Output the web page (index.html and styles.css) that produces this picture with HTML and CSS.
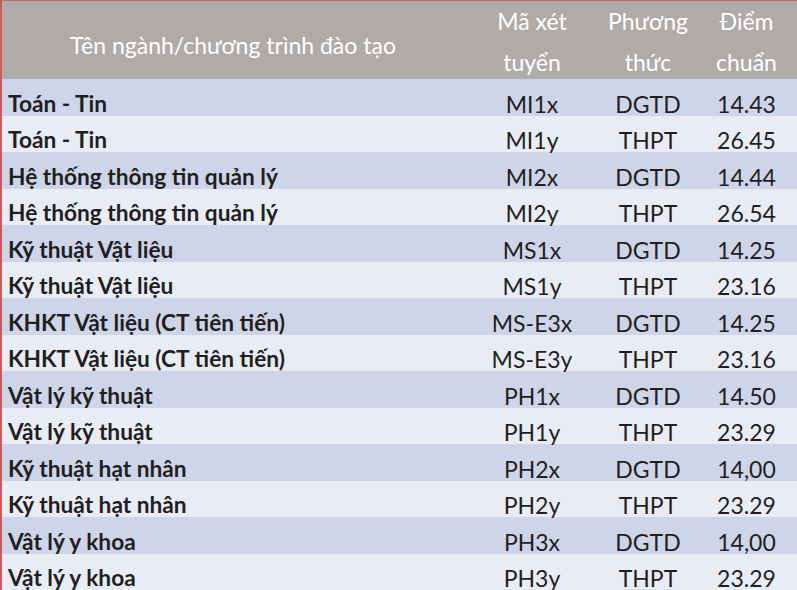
FILE: index.html
```html
<!DOCTYPE html>
<html lang="vi">
<head>
<meta charset="utf-8">
<link rel="stylesheet" href="styles.css">
</head>
<body>
<div class="frame">
<table class="scores">
<colgroup>
<col class="c-name"><col class="c-code"><col class="c-method"><col class="c-score">
</colgroup>
<thead>
<tr>
<th class="h-name"><div class="hd">Tên ngành/chương trình đào tạo</div></th>
<th><div class="hd">Mã xét<br>tuyển</div></th>
<th><div class="hd">Phương<br>thức</div></th>
<th><div class="hd">Điểm<br>chuẩn</div></th>
</tr>
</thead>
<tbody>
<tr><td class="name">Toán - Tin</td><td>MI1x</td><td>DGTD</td><td>14.43</td></tr>
<tr><td class="name">Toán - Tin</td><td>MI1y</td><td>THPT</td><td>26.45</td></tr>
<tr><td class="name">Hệ thống thông tin quản lý</td><td>MI2x</td><td>DGTD</td><td>14.44</td></tr>
<tr><td class="name">Hệ thống thông tin quản lý</td><td>MI2y</td><td>THPT</td><td>26.54</td></tr>
<tr><td class="name">Kỹ thuật Vật liệu</td><td>MS1x</td><td>DGTD</td><td>14.25</td></tr>
<tr><td class="name">Kỹ thuật Vật liệu</td><td>MS1y</td><td>THPT</td><td>23.16</td></tr>
<tr><td class="name">KHKT Vật liệu (CT tiên tiến)</td><td>MS-E3x</td><td>DGTD</td><td>14.25</td></tr>
<tr><td class="name">KHKT Vật liệu (CT tiên tiến)</td><td>MS-E3y</td><td>THPT</td><td>23.16</td></tr>
<tr><td class="name">Vật lý kỹ thuật</td><td>PH1x</td><td>DGTD</td><td>14.50</td></tr>
<tr><td class="name">Vật lý kỹ thuật</td><td>PH1y</td><td>THPT</td><td>23.29</td></tr>
<tr><td class="name">Kỹ thuật hạt nhân</td><td>PH2x</td><td>DGTD</td><td>14,00</td></tr>
<tr><td class="name">Kỹ thuật hạt nhân</td><td>PH2y</td><td>THPT</td><td>23.29</td></tr>
<tr><td class="name">Vật lý y khoa</td><td>PH3x</td><td>DGTD</td><td>14,00</td></tr>
<tr><td class="name">Vật lý y khoa</td><td>PH3y</td><td>THPT</td><td>23.29</td></tr>
</tbody>
</table>
</div>
</body>
</html>
```
FILE: styles.css
```css
html, body {
  margin: 0;
  padding: 0;
  background: #e9ebf5;
}
.frame {
  width: 797px;
  height: 590px;
  overflow: hidden;
  border-top: 1px solid #c8676b;
  border-left: 2px solid #d0585c;
  box-sizing: border-box;
}
.scores {
  width: 795px;
  border-collapse: collapse;
  table-layout: fixed;
  font-family: Lato, "Noto Sans", sans-serif;
  font-size: 23px;
  color: #1f1f22;
}
.c-name { width: 462px; }
.c-code { width: 136px; }
.c-method { width: 96px; }
.c-score { width: 101px; }
thead tr {
  background: #afaba9;
}
th {
  color: #ffffff;
  font-weight: 400;
  line-height: 41px;
  text-align: center;
  vertical-align: top;
  padding: 0;
}
.hd {
  height: 78px;
}
th.h-name .hd {
  padding-top: 24px;
  box-sizing: border-box;
}
tbody tr {
  height: 36.5px;
}
td {
  padding: 13.5px 0 0;
  text-align: center;
  vertical-align: top;
  font-weight: 400;
  line-height: 22px;
}
td.name {
  text-align: left;
  padding-left: 6px;
  font-weight: 700;
  font-size: 22.7px;
}
tbody tr:nth-child(odd) { background: #cfd5e9; }
tbody tr:nth-child(even) { background: #e9ebf5; }
```
